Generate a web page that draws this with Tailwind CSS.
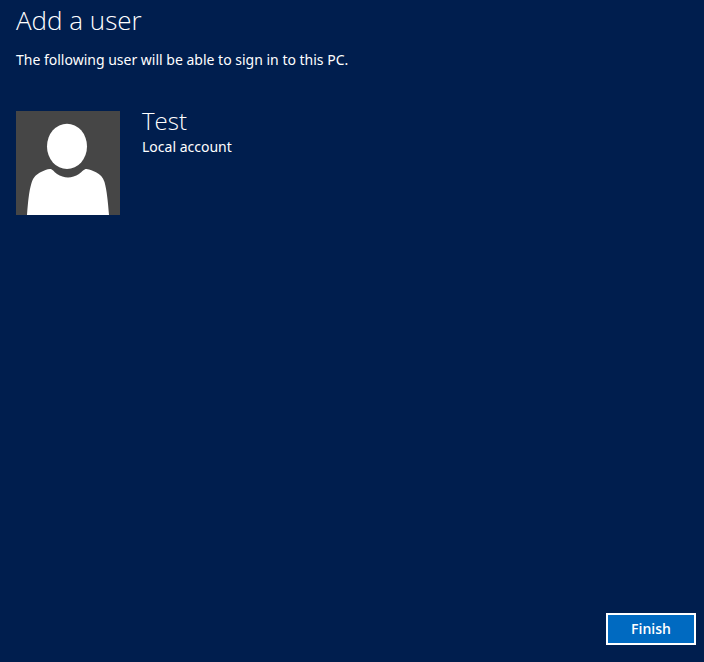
<!DOCTYPE html>
<html lang="en">
<head>
<meta charset="utf-8">
<meta name="viewport" content="width=device-width, initial-scale=1">
<title>Add a user</title>
<script src="https://cdn.jsdelivr.net/npm/@tailwindcss/browser@4"></script>
</head>
<body class="flex min-h-screen flex-col bg-[#001e4e] font-['Noto_Sans','Open_Sans',sans-serif] text-sm text-white">
  <header class="px-4 pt-1">
    <h1 class="font-['Open_Sans',sans-serif] text-[26px] leading-8 font-light">Add a user</h1>
    <p class="mt-3 leading-6">The following user will be able to sign in to this PC.</p>
  </header>
  <main class="flex flex-1 items-start gap-[22px] px-4 pt-[35px]">
    <svg class="mt-1 size-[104px] shrink-0 bg-[#464646]" viewBox="0 0 104 104" fill="#fff" role="img" aria-label="User picture">
      <ellipse cx="51" cy="35.4" rx="20" ry="22.7"/>
      <path d="M11 104C12 91 13 80 15.500 72C17.500 65.500 21 63 25 61C28 59.500 31 58.200 34 58C36.500 57.900 37.500 60.500 41 63C48 67.500 56 67.500 63 63C66.500 60.500 68 57.900 70.500 58C74 58.200 77 59.800 80 61.200C84 63.200 87 66 88.500 71C90.800 79 92 91 93 104Z"/>
    </svg>
    <div>
      <h2 class="font-['Open_Sans',sans-serif] text-2xl leading-7 font-light">Test</h2>
      <p class="leading-6">Local account</p>
    </div>
  </main>
  <footer class="flex justify-end px-2 pb-[17px]">
    <button type="button" class="h-8 min-w-[90px] border-2 border-white bg-[#006ac1] font-['Open_Sans',sans-serif] text-sm font-semibold">Finish</button>
  </footer>
</body>
</html>
